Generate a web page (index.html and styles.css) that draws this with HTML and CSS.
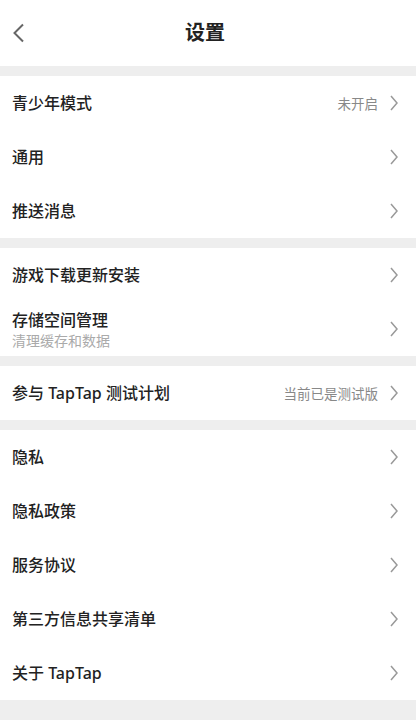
FILE: index.html
```html
<!DOCTYPE html>
<html lang="zh">
  <head>
    <meta charset="UTF-8" />
    <meta name="viewport" content="width=device-width, initial-scale=1.0" />
    <title>设置</title>
    <link rel="stylesheet" href="styles.css">
  </head>
  <body>
    <div class="header">
      <span class="back">
        <svg width="14" height="20" viewBox="0 0 14 20">
          <path d="M11 1.5 L2.5 10 L11 18.5" fill="none" stroke="#666" stroke-width="2" />
        </svg>
      </span>
      <h1 class="header-title">设置</h1>
    </div>

    <div class="group">
      <div class="row">
        <span class="row-title">青少年模式</span>
        <span class="row-value">未开启</span>
        <svg class="arrow" viewBox="0 0 8 16"><path d="M1 1 L7 8 L1 15" /></svg>
      </div>
      <div class="row">
        <span class="row-title">通用</span>
        <svg class="arrow" viewBox="0 0 8 16"><path d="M1 1 L7 8 L1 15" /></svg>
      </div>
      <div class="row">
        <span class="row-title">推送消息</span>
        <svg class="arrow" viewBox="0 0 8 16"><path d="M1 1 L7 8 L1 15" /></svg>
      </div>
    </div>

    <div class="group">
      <div class="row">
        <span class="row-title">游戏下载更新安装</span>
        <svg class="arrow" viewBox="0 0 8 16"><path d="M1 1 L7 8 L1 15" /></svg>
      </div>
      <div class="row">
        <div class="row-main">
          <span class="row-title">存储空间管理</span>
          <span class="row-sub">清理缓存和数据</span>
        </div>
        <svg class="arrow" viewBox="0 0 8 16"><path d="M1 1 L7 8 L1 15" /></svg>
      </div>
    </div>

    <div class="group">
      <div class="row">
        <span class="row-title">参与 TapTap 测试计划</span>
        <span class="row-value">当前已是测试版</span>
        <svg class="arrow" viewBox="0 0 8 16"><path d="M1 1 L7 8 L1 15" /></svg>
      </div>
    </div>

    <div class="group">
      <div class="row">
        <span class="row-title">隐私</span>
        <svg class="arrow" viewBox="0 0 8 16"><path d="M1 1 L7 8 L1 15" /></svg>
      </div>
      <div class="row">
        <span class="row-title">隐私政策</span>
        <svg class="arrow" viewBox="0 0 8 16"><path d="M1 1 L7 8 L1 15" /></svg>
      </div>
      <div class="row">
        <span class="row-title">服务协议</span>
        <svg class="arrow" viewBox="0 0 8 16"><path d="M1 1 L7 8 L1 15" /></svg>
      </div>
      <div class="row">
        <span class="row-title">第三方信息共享清单</span>
        <svg class="arrow" viewBox="0 0 8 16"><path d="M1 1 L7 8 L1 15" /></svg>
      </div>
      <div class="row">
        <span class="row-title">关于 TapTap</span>
        <svg class="arrow" viewBox="0 0 8 16"><path d="M1 1 L7 8 L1 15" /></svg>
      </div>
    </div>
  </body>
</html>
```

FILE: styles.css
```css
* {
  margin: 0;
  padding: 0;
  box-sizing: border-box;
}

body {
  font-family: "Noto Sans", "Noto Sans CJK SC", sans-serif;
  background-color: #eeeeee;
  min-height: 100vh;
  color: #222;
}

.header {
  height: 66px;
  background-color: white;
  display: flex;
  align-items: center;
  justify-content: center;
  position: relative;
}

.back {
  position: absolute;
  left: 12px;
  top: 23px;
  display: flex;
}

.header-title {
  font-size: 20px;
  font-weight: bold;
  color: #222;
  line-height: 1;
  margin-right: 6px;
}

.group {
  background-color: white;
  margin-top: 10px;
}

.row {
  height: 54px;
  display: flex;
  align-items: center;
  padding: 0 18px 0 12px;
}

.row-title {
  font-size: 16px;
  font-weight: 500;
  color: #222;
  flex: 1;
  line-height: 1.3;
}

.row-main {
  flex: 1;
  display: flex;
  flex-direction: column;
  gap: 2px;
  padding-top: 2px;
}

.row-sub {
  font-size: 14px;
  color: #aaa;
  line-height: 1.3;
}

.row-value {
  font-size: 13.5px;
  color: #888;
  margin-right: 12px;
}

.arrow {
  width: 8px;
  height: 16px;
  fill: none;
  stroke: #999;
  stroke-width: 1.5;
}
```
